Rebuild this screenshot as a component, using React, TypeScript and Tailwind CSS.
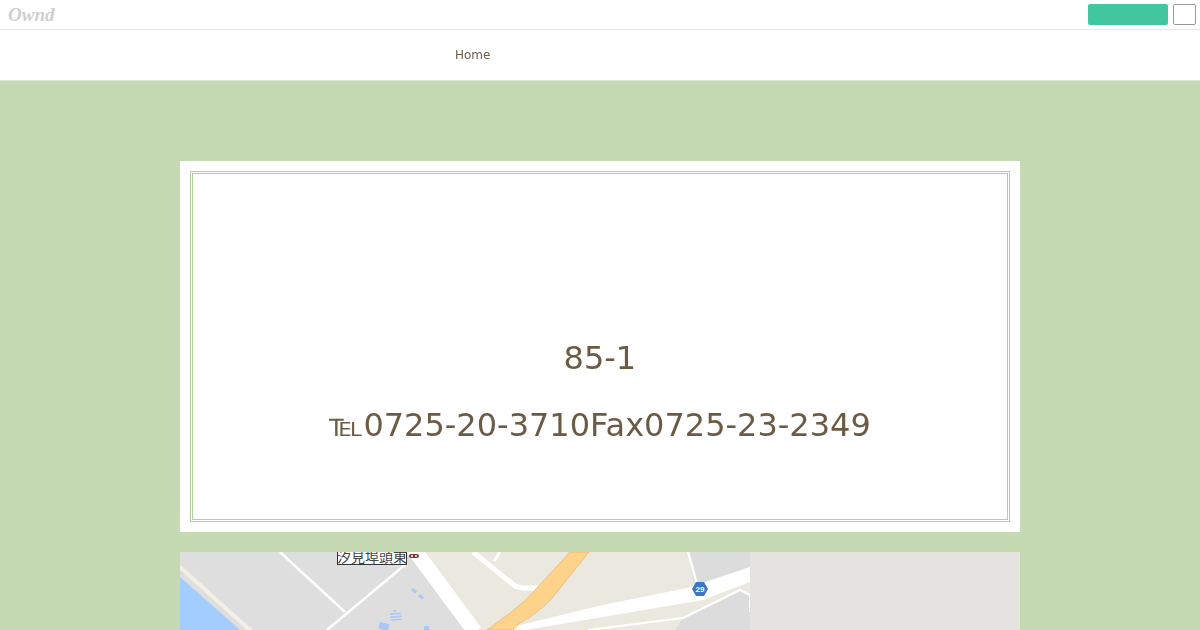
import React from 'react';

const MapPicture: React.FC = () => (
    <svg width="570" height="78" viewBox="0 0 570 78" className="block shrink-0">
        <rect width="570" height="78" fill="#dedede" />
        {/* land to the right of the wide road */}
        <polygon points="233,0 570,0 570,78 291,78" fill="#ebe9df" />
        <polygon points="508,0 570,0 570,20 515,38" fill="#dcdcdc" />
        <polygon points="495,78 503,66 560,38 570,43 570,78" fill="#dcdcdc" />
        {/* water */}
        <polygon points="0,25 60,78 0,78" fill="#a3ccff" />
        <line x1="0" y1="15" x2="72" y2="80" stroke="#f2f0e4" strokeWidth="4" />
        {/* small roads */}
        <line x1="100" y1="0" x2="165" y2="60" stroke="#fff" strokeWidth="2.5" />
        <line x1="147" y1="78" x2="227" y2="11" stroke="#fff" strokeWidth="2.5" />
        <line x1="233" y1="-4" x2="295" y2="80" stroke="#fff" strokeWidth="15" />
        <polyline points="293,0 335,34 342,36 360,36" fill="none" stroke="#fff" strokeWidth="5" strokeLinejoin="round" />
        <line x1="320" y1="0" x2="314" y2="9" stroke="#fff" strokeWidth="3" />
        <line x1="508" y1="0" x2="517" y2="32" stroke="#fff" strokeWidth="2.5" />
        {/* main roads */}
        <polygon points="320,78 423,53 507,36 570,15 570,30 523,48 423,65 345,78" fill="#fff" />
        <polyline points="408,78 503,66 560,38 570,43 570,60" fill="none" stroke="#fff" strokeWidth="2" strokeLinejoin="round" />
        <path d="M390 0 L357 36 Q345 50 330 61 L307 78 L333 78 L340 71 Q360 60 373 45 L409 0 Z" fill="#fdd38b" stroke="#e8b467" strokeWidth="0.7" />
        {/* buildings */}
        <g fill="#a8c8f8">
            <rect x="232" y="37" width="5" height="3" transform="rotate(40 234 38)" />
            <rect x="239" y="43" width="5" height="3" transform="rotate(40 241 44)" />
            <rect x="213" y="58" width="3" height="1.5" />
            <rect x="210" y="61" width="11" height="1.5" transform="rotate(-5 215 61)" />
            <rect x="210" y="64" width="12" height="1.5" transform="rotate(-5 215 64)" />
            <rect x="211" y="67" width="11" height="1.5" transform="rotate(-5 215 67)" />
            <rect x="199" y="71" width="10" height="7" transform="rotate(15 204 74)" />
            <rect x="244" y="74" width="5" height="4" />
        </g>
        {/* route badge */}
        <polygon points="512,37 516,30 524,30 528,37 524,44 516,44" fill="#3a78c4" />
        <text x="520" y="40" textAnchor="middle" fontSize="8" fontWeight="700" fill="#fff" fontFamily="'Liberation Sans', sans-serif">
            29
        </text>
        {/* station label */}
        <rect x="157.5" y="-4" width="69" height="16.5" fill="#fff" stroke="#333" />
        <text x="192" y="10" textAnchor="middle" fontSize="14" fill="#444" fontFamily="'Noto Sans CJK JP', sans-serif">
            汐見埠頭東
        </text>
        <rect x="229" y="2" width="10" height="4" rx="2" fill="#7a3b2e" />
        <circle cx="232" cy="4" r="1" fill="#fff" />
        <circle cx="236" cy="4" r="1" fill="#fff" />
    </svg>
);

const App: React.FC = () => {
    return (
        <div className="h-screen overflow-hidden bg-[#c5d9b2] font-['DejaVu_Sans',sans-serif]">
            <div className="flex h-[30px] items-start justify-between border-b border-[#e8e8e8] bg-white pl-2 pr-1">
                <span className="font-['Liberation_Serif',serif] text-[19px] leading-[29px] font-bold text-[#cfcfcf] italic">
                    Ownd
                </span>
                <div className="flex gap-[5px] pt-1">
                    <div className="h-[21px] w-20 rounded-xs bg-[#42c6a0]" />
                    <div className="h-[21px] w-[23px] rounded-xs border border-[#999] bg-white" />
                </div>
            </div>

            <div className="flex h-[51px] items-center border-b border-[#dfe8d6] bg-white pl-[455px]">
                <a className="text-xs text-[#6b5b45] will-change-transform">Home</a>
            </div>

            <div className="mx-auto mt-20 w-[840px]">
                <div className="h-[371px] bg-white p-2.5">
                    <div className="flex h-full flex-col items-center justify-end border-[3px] border-double border-[#b4d09a] pb-[70px] text-[32px] leading-[48px] text-[#6b5b45]">
                        <div className="flex flex-col items-center will-change-transform">
                            <p className="mb-[19px]">85-1</p>
                            <p>℡0725-20-3710Fax0725-23-2349</p>
                        </div>
                    </div>
                </div>

                <div className="mt-5 flex h-[300px] bg-[#e5e3df]">
                    <MapPicture />
                </div>
            </div>
        </div>
    );
};

export default App;
